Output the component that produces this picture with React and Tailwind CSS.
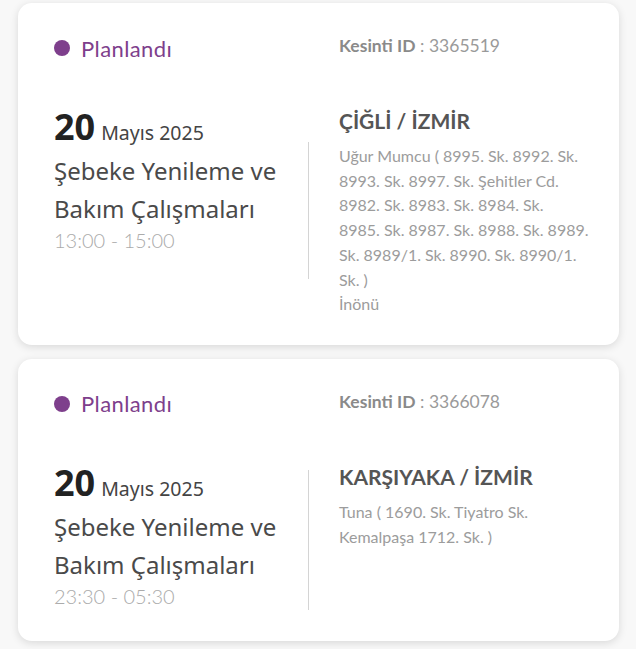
import React from "react";

const ubuntu = { fontFamily: '"Noto Sans", "Open Sans", sans-serif' };
const geo = { fontFamily: 'Lato, "Noto Sans", sans-serif' };

const data = [
  {
    id: "3365519",
    place: "ÇİĞLİ / İZMİR",
    time: "13:00 - 15:00",
    divider: "mt-[35px] h-[137px]",
    lines: [
      "Uğur Mumcu ( 8995. Sk. 8992. Sk.",
      "8993. Sk. 8997. Sk. Şehitler Cd.",
      "8982. Sk. 8983. Sk. 8984. Sk.",
      "8985. Sk. 8987. Sk. 8988. Sk. 8989.",
      "Sk. 8989/1. Sk. 8990. Sk. 8990/1.",
      "Sk. )",
      "İnönü",
    ],
  },
  {
    id: "3366078",
    place: "KARŞIYAKA / İZMİR",
    time: "23:30 - 05:30",
    divider: "mt-[7px] h-[140px]",
    lines: ["Tuna ( 1690. Sk. Tiyatro Sk.", "Kemalpaşa 1712. Sk. )"],
  },
];

function Card({ d }) {
  return (
    <div className="ml-[18px] w-[601px] rounded-[14px] bg-white shadow-[0_2px_8px_rgba(0,0,0,0.13)] pl-[36px] pr-[30px] pt-[31px] pb-[28px]">
      <div className="flex items-center h-[28px]">
        <div className="w-[285px] flex items-center">
          <span className="w-[16px] h-[16px] rounded-full bg-[#7e3f8c]"></span>
          <span className="ml-[11px] text-[22px] tracking-[0.4px] text-[#7e3f8c]" style={geo}>
            Planlandı
          </span>
        </div>
        <div className="text-[17.5px] text-[#9a9a9a] -mt-[4px]" style={geo}>
          <span className="font-bold text-[#8a8a8a]">Kesinti ID</span> : {d.id}
        </div>
      </div>
      <div className="flex mt-[45px]">
        <div className="w-[254px] shrink-0 mb-[5px]" style={ubuntu}>
          <div className="leading-[40px] text-[#222]">
            <span className="text-[36px] font-bold">20</span>
            <span className="text-[19.5px] text-[#444] ml-[6px]">Mayıs 2025</span>
          </div>
          <div className="text-[24px] leading-[38px] text-[#4a4a4a] -mt-[2px]">
            Şebeke Yenileme ve Bakım Çalışmaları
          </div>
          <div className="text-[20px] leading-[24px] text-[#ababab] font-light" style={geo}>
            {d.time}
          </div>
        </div>
        <div className={"self-start w-px bg-[#d4d4d4] shrink-0 " + d.divider}></div>
        <div className="ml-[30px] flex-1" style={geo}>
          <div className="text-[21px] font-bold leading-[28px] text-[#555]">{d.place}</div>
          <div className="mt-[9px] text-[16px] leading-[24.7px] text-[#9c9c9c]">
            {d.lines.map((l, i) => (
              <div key={i} className="whitespace-nowrap">{l}</div>
            ))}
          </div>
        </div>
      </div>
    </div>
  );
}

export default function App() {
  return (
    <div className="min-h-[649px] bg-[#f8f8f8] pt-[3px] flex flex-col gap-[14px]">
      {data.map((d) => (
        <Card key={d.id} d={d} />
      ))}
    </div>
  );
}
